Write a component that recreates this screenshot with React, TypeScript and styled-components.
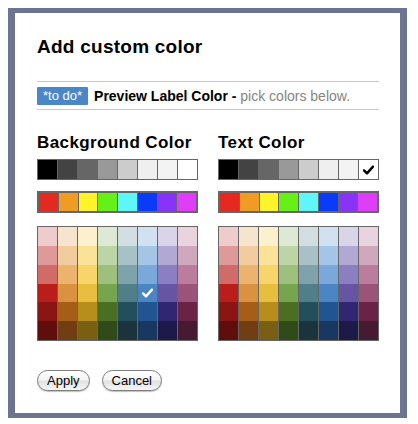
import React from 'react';
import styled, { createGlobalStyle } from 'styled-components';

const GlobalStyle = createGlobalStyle`
  *, *::before, *::after {
    box-sizing: border-box;
  }
  body {
    margin: 8px;
    background: #fff;
    font-family: "Liberation Sans", Arial, Helvetica, sans-serif;
  }
`;

const greys = ['#000000', '#434343', '#666666', '#999999', '#cccccc', '#efefef', '#f3f3f3', '#ffffff'];
const brights = ['#e42a20', '#f09b23', '#fff42a', '#67f018', '#5ef6f9', '#0a3bf9', '#8a33f8', '#df3df8'];
const shades = [
  ['#eecccc', '#f7e4cf', '#fdf0cf', '#dde8d5', '#d2dee2', '#d2e1f1', '#dad4e9', '#e8d3de'],
  ['#de9a98', '#f2cb9e', '#fbe299', '#bdd4a6', '#a8c1c6', '#a4c5e6', '#b2a8d4', '#cfa8bd'],
  ['#d16b68', '#ecb36f', '#f7d56b', '#9dc07d', '#7ea3aa', '#7aa8da', '#8c7fc1', '#ba7d9d'],
  ['#b91e1a', '#d9923f', '#e8be3f', '#77a44f', '#507f89', '#4a86c4', '#6754a3', '#9b5479'],
  ['#8b1512', '#a65e17', '#b78e1b', '#4a6f23', '#234e5b', '#215592', '#312672', '#6a2246'],
  ['#5f0e0b', '#703e11', '#7a5f12', '#304a18', '#1a333c', '#193861', '#1d1a4a', '#461a30'],
];

const Frame = styled.div`
  width: 399px;
  height: 410px;
  background: #fff;
  border-style: solid;
  border-color: #6b7491;
  border-width: 5px 7px;
  padding: 23px 21px 0 22px;
`;

const Title = styled.h1`
  margin: 0;
  font-size: 19px;
  line-height: 22px;
  font-weight: bold;
  letter-spacing: 0.25px;
  color: #000;
`;

const PreviewBar = styled.div`
  margin-top: 23px;
  height: 29px;
  border-top: 1px solid #c9c9c9;
  border-bottom: 1px solid #c9c9c9;
  display: flex;
  align-items: center;
  gap: 6px;
  font-size: 14px;
`;

const Chip = styled.span`
  height: 18px;
  line-height: 18px;
  padding: 0 6px;
  background: #4b87c6;
  color: #fff;
  font-size: 13px;
  border-radius: 1px;
`;

const PreviewText = styled.span`
  font-weight: bold;
  color: #000;
`;

const Hint = styled.span`
  color: #858585;
`;

const Columns = styled.div`
  margin-top: 23px;
  display: grid;
  grid-template-columns: 161px 161px;
  column-gap: 20px;
`;

const Column = styled.div`
  display: flex;
  flex-direction: column;
`;

const Heading = styled.h2`
  margin: 0 0 6px;
  font-size: 17px;
  line-height: 20px;
  font-weight: bold;
  letter-spacing: 0.4px;
  color: #000;
`;

const SwatchRow = styled.div<{ $thick?: boolean }>`
  display: grid;
  grid-template-columns: repeat(8, 1fr);
  column-gap: 1px;
  height: ${(p) => (p.$thick ? 22 : 21)}px;
  border: ${(p) => (p.$thick ? 2 : 1)}px solid #666;
  background: #666;
  margin-bottom: ${(p) => (p.$thick ? 13 : 11)}px;
`;

const ShadeGrid = styled.div`
  display: grid;
  grid-template-columns: repeat(8, 1fr);
  grid-template-rows: repeat(6, 1fr);
  column-gap: 1px;
  height: 115px;
  border: 1px solid #666;
  background: #666;
`;

const Swatch = styled.div<{ $color: string }>`
  background: ${(p) => p.$color};
  display: flex;
  align-items: center;
  justify-content: center;
`;

const Check: React.FC<{ color: string }> = ({ color }) => (
  <svg width="11" height="10" viewBox="0 0 11 10">
    <path d="M1 5.4 L4 8.4 L10 1.6" fill="none" stroke={color} strokeWidth="2.4" strokeLinecap="round" strokeLinejoin="round" />
  </svg>
);

const Buttons = styled.div`
  margin-top: 29px;
  display: flex;
  gap: 12px;
`;

const Button = styled.button`
  height: 21px;
  padding: 0 9px;
  border: 1px solid #7d7d7d;
  border-radius: 11px;
  background: linear-gradient(to bottom, #ffffff 0%, #f4f4f4 45%, #e2e2e2 55%, #f6f6f6 100%);
  box-shadow: 0 1px 1px rgba(0, 0, 0, 0.25);
  font-family: "Liberation Sans", Arial, sans-serif;
  font-size: 13px;
  line-height: 18px;
  color: #000;
`;

type PickerProps = {
  title: string;
  greyCheck?: number;
  shadeCheck?: [number, number];
};

const Picker: React.FC<PickerProps> = ({ title, greyCheck, shadeCheck }) => (
  <Column>
    <Heading>{title}</Heading>
    <SwatchRow>
      {greys.map((c, i) => (
        <Swatch key={c} $color={c}>
          {greyCheck === i && <Check color="#000" />}
        </Swatch>
      ))}
    </SwatchRow>
    <SwatchRow $thick>
      {brights.map((c) => (
        <Swatch key={c} $color={c} />
      ))}
    </SwatchRow>
    <ShadeGrid>
      {shades.map((row, r) =>
        row.map((c, i) => (
          <Swatch key={`${r}-${i}`} $color={c}>
            {shadeCheck && shadeCheck[0] === r && shadeCheck[1] === i && <Check color="#fff" />}
          </Swatch>
        )),
      )}
    </ShadeGrid>
  </Column>
);

const App: React.FC = () => {
  return (
    <>
      <GlobalStyle />
      <Frame>
        <Title>Add custom color</Title>
        <PreviewBar>
          <Chip>*to do*</Chip>
          <span>
            <PreviewText>Preview Label Color -</PreviewText>
            <Hint> pick colors below.</Hint>
          </span>
        </PreviewBar>
        <Columns>
          <Picker title="Background Color" shadeCheck={[3, 5]} />
          <Picker title="Text Color" greyCheck={7} />
        </Columns>
        <Buttons>
          <Button>Apply</Button>
          <Button>Cancel</Button>
        </Buttons>
      </Frame>
    </>
  );
};

export default App;
